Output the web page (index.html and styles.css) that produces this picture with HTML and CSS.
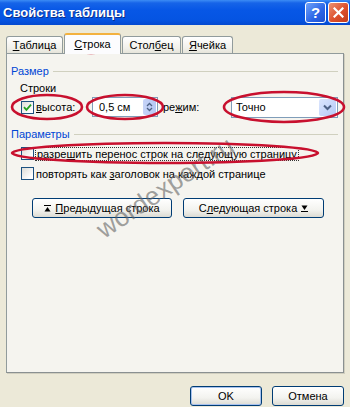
FILE: index.html
```html
<!DOCTYPE html>
<html lang="ru">
<head>
<meta charset="utf-8">
<title>Свойства таблицы</title>
<link rel="stylesheet" href="styles.css">
</head>
<body>
<div class="window">
  <div class="titlebar">
    <span class="title">Свойства таблицы</span>
    <div class="ctrls">
      <span class="cbtn help">?</span>
      <span class="cbtn close">
        <svg width="11" height="11" viewBox="0 0 11 11"><path d="M1.5 1.5 L9.5 9.5 M9.5 1.5 L1.5 9.5" stroke="#fff" stroke-width="2.2" stroke-linecap="square"/></svg>
      </span>
    </div>
  </div>

  <div class="body">
    <div class="tabs">
      <span class="tab"><u>Т</u>аблица</span>
      <span class="tab active"><u>С</u>трока</span>
      <span class="tab">Стол<u>б</u>ец</span>
      <span class="tab"><u>Я</u>чейка</span>
    </div>
    <div class="panel">
      <div class="group"><span class="legend">Размер</span><span class="rule"></span></div>
      <div class="sub">Строки</div>
      <div class="sizerow">
        <span class="check checked">
          <svg width="9" height="9" viewBox="0 0 9 9"><path d="M1 4.2 L3.4 6.8 L8 1.6" fill="none" stroke="#21A121" stroke-width="1.8"/></svg>
        </span>
        <span class="lbl height"><u>в</u>ысота:</span>
        <span class="spin">
          <span class="spintext">0,5 см</span>
          <span class="spinbtns">
            <svg width="7" height="12" viewBox="0 0 7 12"><path d="M1 5 L3.5 2.5 L6 5" fill="none" stroke="#4D6185" stroke-width="1.3"/><path d="M1 7 L3.5 9.5 L6 7" fill="none" stroke="#4D6185" stroke-width="1.3"/></svg>
          </span>
        </span>
        <span class="lbl mode">ре<u>ж</u>им:</span>
        <span class="select">
          <span class="seltext">Точно</span>
          <span class="selbtn">
            <svg width="9" height="7" viewBox="0 0 9 7"><path d="M1 1.5 L4.5 5 L8 1.5" fill="none" stroke="#4D6185" stroke-width="2"/></svg>
          </span>
        </span>
      </div>
      <div class="group g2"><span class="legend">Параметры</span><span class="rule"></span></div>
      <div class="optrow r1"><span class="check"></span><span class="lbl focus">разре<u>ш</u>ить перенос строк на следующую страницу</span></div>
      <div class="optrow r2"><span class="check"></span><span class="lbl">повторять как <u>з</u>аголовок на каждой странице</span></div>
      <div class="navrow">
        <span class="btn nav">
          <svg width="7" height="7" viewBox="0 0 7 7"><path d="M0 0.5 H7" stroke="#000" stroke-width="1"/><path d="M0.5 6.5 L3.5 2 L6.5 6.5 Z" fill="#000"/></svg>
          <span><u>П</u>редыдущая строка</span>
        </span>
        <span class="btn nav next">
          <span>С<u>л</u>едующая строка</span>
          <svg width="7" height="7" viewBox="0 0 7 7"><path d="M0.5 0.5 L3.5 5 L6.5 0.5 Z" fill="#000"/><path d="M0 6.5 H7" stroke="#000" stroke-width="1"/></svg>
        </span>
      </div>
    </div>
    <div class="footer">
      <span class="btn ok">OK</span>
      <span class="btn">Отмена</span>
    </div>
  </div>

  <div class="watermark">wordexpert.ru</div>
  <svg class="marks" width="350" height="407" viewBox="0 0 350 407">
    <g fill="none" stroke="#C8102E" stroke-width="2.6">
      <ellipse cx="91" cy="44" rx="24" ry="9"/>
      <ellipse cx="47" cy="107" rx="35" ry="12"/>
      <ellipse cx="125" cy="107" rx="38" ry="12"/>
      <ellipse cx="284" cy="107" rx="60" ry="15"/>
      <ellipse cx="165" cy="153" rx="153" ry="10"/>
    </g>
  </svg>
</div>
</body>
</html>
```

FILE: styles.css
```css
* { box-sizing: border-box; }
html, body { margin: 0; padding: 0; }
body {
  width: 350px;
  height: 407px;
  overflow: hidden;
  background: #ECE9D8;
  font-family: "Liberation Sans", Arial, sans-serif;
  font-size: 11px;
  color: #000;
}
.window {
  position: relative;
  width: 350px;
  height: 407px;
}
u { text-decoration: underline; text-underline-offset: 1px; }

.titlebar {
  height: 25px;
  display: flex;
  align-items: center;
  justify-content: space-between;
  background: linear-gradient(#3C8CF5 0, #1664E8 3px, #0757E6 40%, #0554E2 80%, #0449CF 100%);
}
.title {
  padding-left: 3px;
  color: #fff;
  font-weight: bold;
  font-size: 13px;
  text-shadow: 1px 1px #0A2F8C;
}
.ctrls { display: flex; gap: 2px; padding-right: 1px; }
.cbtn {
  width: 21px;
  height: 21px;
  border: 1px solid #fff;
  border-radius: 3px;
  display: flex;
  align-items: center;
  justify-content: center;
  color: #fff;
  font-weight: bold;
  font-size: 15px;
}
.help { background: linear-gradient(135deg, #6FA2F8, #2A64E6 60%, #1D4FD0); }
.close { background: linear-gradient(135deg, #EB9272, #DD4F2C 55%, #C23C1A); }

.body { padding: 0 6px 0 6px; }
.tabs {
  display: flex;
  align-items: flex-end;
  height: 28px;
  position: relative;
  z-index: 1;
}
.tab {
  height: 17px;
  padding: 0 6px;
  border: 1px solid #919B9C;
  border-bottom: none;
  border-radius: 3px 3px 0 0;
  background: linear-gradient(#FFFFFF, #F1F0EA 70%, #E6E4DA);
  display: flex;
  align-items: center;
  margin-right: 1px;
  line-height: 1;
}
.tab:first-child { width: 57px; justify-content: center; }
.tab.active {
  height: 21px;
  width: 57px;
  justify-content: center;
  border-top: 2px solid #F3B13E;
  background: #FCFCFE;
  margin-bottom: -1px;
}
.tab:nth-child(3) { width: 59px; justify-content: center; }
.tab:nth-child(4) { width: 51px; justify-content: center; }

.panel {
  width: 338px;
  height: 320px;
  border: 1px solid #919B9C;
  border-right-color: #8A9091;
  border-bottom-color: #8A9091;
  background: #F5F4EF;
  box-shadow: 1px 1px 0 #D0CEBF;
}
.group {
  display: flex;
  align-items: center;
  margin: 10px 5px 0 4px;
  height: 14px;
}
.g2 { margin-top: 9px; }
.legend { color: #0046D5; padding-right: 4px; }
.rule { flex: 1; height: 1px; background: #D0D0BF; }
.sub { margin: 3px 0 0 13px; height: 14px; line-height: 14px; }

.sizerow {
  display: flex;
  align-items: center;
  height: 22px;
  margin-top: 1px;
}
.check {
  width: 13px;
  height: 13px;
  border: 1px solid #1C5180;
  background: linear-gradient(135deg, #DCDCD7, #FFFFFF 80%);
  display: flex;
  align-items: center;
  justify-content: center;
  margin-left: 14px;
  flex: none;
}
.lbl { margin-left: 2px; white-space: nowrap; }
.height { width: 41px; }
.spin {
  margin-left: 15px;
  width: 66px;
  height: 20px;
  border: 1px solid #7F9DB9;
  background: #fff;
  display: flex;
  align-items: center;
  padding: 1px;
}
.spintext { flex: 1; padding-left: 5px; }
.spinbtns {
  width: 13px;
  height: 16px;
  border-radius: 2px;
  background: linear-gradient(90deg, #C6D3F7, #B6C8F5);
  display: flex;
  align-items: center;
  justify-content: center;
}
.mode { margin-left: 5px; width: 49px; }
.select {
  margin-left: 19px;
  width: 107px;
  height: 21px;
  border: 1px solid #7F9DB9;
  background: #fff;
  display: flex;
  align-items: center;
  padding: 1px;
}
.seltext { flex: 1; padding-left: 3px; }
.selbtn {
  width: 17px;
  height: 17px;
  border-radius: 2px;
  background: linear-gradient(135deg, #DCE6FD, #B5C9F7);
  display: flex;
  align-items: center;
  justify-content: center;
}

.optrow {
  display: flex;
  align-items: center;
  height: 15px;
}
.r1 { margin-top: 5px; }
.r2 { margin-top: 5px; }
.focus { outline: 1px dotted #333; outline-offset: 0; padding: 0 1px; }

.navrow {
  display: flex;
  gap: 11px;
  margin: 17px 0 0 25px;
}
.btn {
  height: 20px;
  border: 1px solid #003C74;
  border-radius: 3px;
  background: linear-gradient(#FFFFFF, #F3F3EF 60%, #DCDBD3);
  display: flex;
  align-items: center;
  justify-content: center;
  gap: 4px;
}
.nav { width: 140px; }
.nav.next { width: 141px; }

.footer {
  display: flex;
  justify-content: flex-end;
  gap: 10px;
  margin-top: 13px;
}
.footer .btn { width: 72px; height: 20px; }
.footer .ok { box-shadow: inset 0 0 0 1px #A8C2EE; }

.watermark {
  position: absolute;
  left: 108px;
  top: 214px;
  font-size: 26px;
  color: rgba(100, 100, 100, 0.6);
  transform: rotate(-34deg);
  transform-origin: left bottom;
  white-space: nowrap;
  pointer-events: none;
}
.marks {
  position: absolute;
  left: 0;
  top: 0;
  pointer-events: none;
}
```
